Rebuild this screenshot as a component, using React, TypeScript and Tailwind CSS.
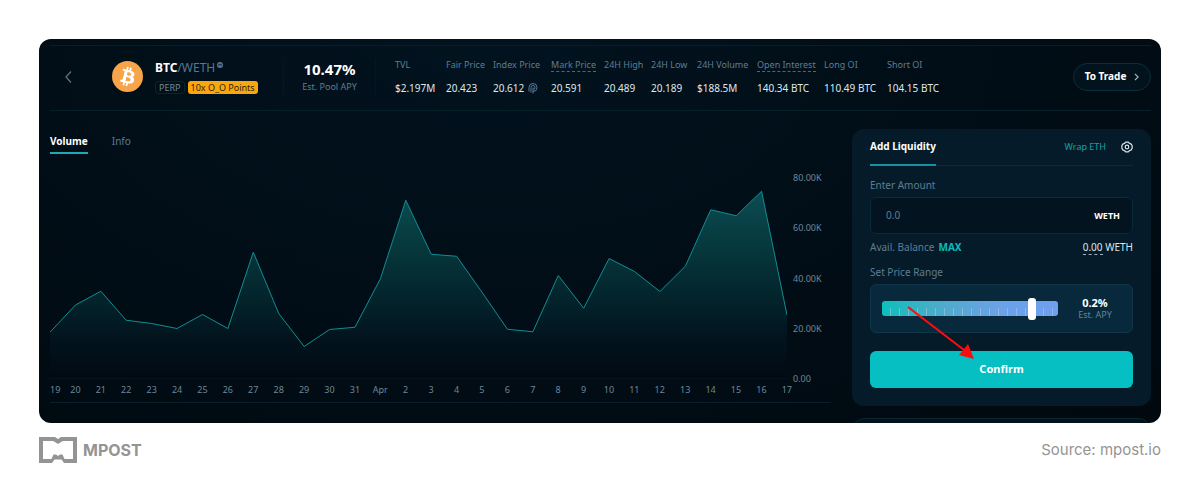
import React, { useState } from "react";

const stats = [
  { label: "TVL", value: "$2.197M" },
  { label: "Fair Price", value: "20.423" },
  { label: "Index Price", value: "20.612", oracle: true },
  { label: "Mark Price", value: "20.591", hint: true },
  { label: "24H High", value: "20.489" },
  { label: "24H Low", value: "20.189" },
  { label: "24H Volume", value: "$188.5M" },
  { label: "Open Interest", value: "140.34 BTC", hint: true },
  { label: "Long OI", value: "110.49 BTC" },
  { label: "Short OI", value: "104.15 BTC" },
];

const days = [
  "19", "20", "21", "22", "23", "24", "25", "26", "27", "28", "29", "30", "31", "Apr", "2",
  "3", "4", "5", "6", "7", "8", "9", "10", "11", "12", "13", "14", "15", "16", "17",
];

// Daily volume in thousands
const volumes = [
  18.3, 29.2, 34.7, 23.1, 21.8, 19.8, 25.4, 19.8, 50.3, 25.8, 12.6, 19.4, 20.3, 39.7, 71.1,
  49.5, 48.7, 34.3, 19.5, 18.5, 41, 27.9, 47.8, 42.6, 34.6, 44.7, 67.3, 64.9, 74.7, 25.2,
];

const points = volumes.map((v, i) => `${i * 10},${(80 - v) * 2.5}`).join(" ");

function BitcoinIcon() {
  return (
    <svg viewBox="0 0 32 32" className="size-[31px] shrink-0" aria-hidden="true">
      <circle cx="16" cy="16" r="16" fill="#f7a54a" />
      <path
        fill="#fff"
        d="M23.19 14.02c.31-2.1-1.28-3.22-3.47-3.98l.71-2.84-1.73-.43-.69 2.77c-.45-.12-.92-.22-1.38-.33l.69-2.78-1.73-.43-.7 2.84c-.38-.09-.75-.17-1.11-.26l-2.38-.6-.46 1.85s1.28.3 1.25.31c.7.18.83.64.81 1.01l-.81 3.23c.05.01.11.03.18.06l-.18-.05-1.13 4.53c-.09.21-.3.53-.79.41.02.03-1.26-.31-1.26-.31l-.86 1.98 2.25.56c.42.1.83.21 1.23.31l-.72 2.88 1.73.43.71-2.84c.47.13.93.25 1.38.36l-.71 2.83 1.73.43.72-2.87c2.95.56 5.17.33 6.1-2.34.75-2.14-.04-3.38-1.59-4.19 1.13-.26 1.98-1 2.21-2.54zm-3.95 5.54c-.53 2.15-4.15.99-5.32.7l.95-3.81c1.17.29 4.93.87 4.37 3.11zm.54-5.57c-.49 1.96-3.5.96-4.48.72l.86-3.45c.98.24 4.13.7 3.62 2.73z"
      />
    </svg>
  );
}

function PythIcon() {
  return (
    <svg viewBox="0 0 20 22" className="h-[11px] w-[10px]" fill="none" stroke="#587b96" strokeWidth="2" aria-hidden="true">
      <path d="M2 17V9a8 8 0 1 1 8 8M6 19V9a4 4 0 1 1 4 4M10 21V9" />
    </svg>
  );
}

function VolumeChart() {
  return (
    <section className="flex min-w-0 flex-1 flex-col">
      <nav className="flex gap-6 text-[10px] leading-4">
        <button className="border-b-2 border-[#1fa9b0] pb-[3px] font-bold text-white">Volume</button>
        <button className="border-b-2 border-transparent pb-[3px] text-[#5f7b90]">Info</button>
      </nav>
      <div className="mt-4 flex border-b border-[#05202b] pb-1">
        <div className="min-w-0 flex-1">
          <div className="pt-2">
            <svg
              viewBox="0 0 290 200"
              preserveAspectRatio="none"
              className="block h-[201px] w-full border-b border-[#04141f]"
              role="img"
              aria-label="Daily volume"
            >
              <defs>
                <linearGradient id="volumeFill" gradientUnits="userSpaceOnUse" x1="0" y1="12" x2="0" y2="200">
                  <stop offset="0" stopColor="#0b4d54" />
                  <stop offset="0.3" stopColor="#06383c" />
                  <stop offset="0.6" stopColor="#03222a" />
                  <stop offset="0.8" stopColor="#02131d" />
                  <stop offset="1" stopColor="#010a12" />
                </linearGradient>
              </defs>
              <polygon points={`0,200 ${points} 290,200`} fill="url(#volumeFill)" />
              <polyline points={points} fill="none" stroke="#118d92" strokeWidth="1" vectorEffect="non-scaling-stroke" />
            </svg>
          </div>
          <ol className="-mr-3 flex justify-between overflow-hidden pt-[3px] pr-3 text-[9px] leading-4 text-[#6d8799]">
            {days.map((d, i) => (
              <li key={d} className={i === 0 ? "flex w-0 justify-start" : "flex w-0 justify-center"}>
                <span>{d}</span>
              </li>
            ))}
          </ol>
        </div>
        <ul className="flex h-[217px] w-11 flex-col justify-between pl-1.5 text-[9px] leading-4 text-[#6d8799]">
          {["80.00K", "60.00K", "40.00K", "20.00K", "0.00"].map((t) => (
            <li key={t}>{t}</li>
          ))}
        </ul>
      </div>
    </section>
  );
}

function LiquidityPanel() {
  const [range, setRange] = useState(87);
  return (
    <form className="relative rounded-xl bg-[#051b29] px-[18px] pb-[18px]" onSubmit={(e) => e.preventDefault()}>
      <div className="flex h-[37px] items-stretch border-b border-[#0a2c38] text-[10px]">
        <h2 className="-mb-px flex items-center border-b-2 border-[#1791a0] font-bold text-white">Add Liquidity</h2>
        <button type="button" className="ml-auto text-[9px] text-[#12a3a6]">Wrap ETH</button>
        <button type="button" aria-label="Settings" className="ml-[15px]">
          <svg viewBox="0 0 24 24" className="size-3" fill="none" stroke="#dce6ec" strokeWidth="2.4" aria-hidden="true">
            <path d="M9.5 2.2h5l2.6 2.6 3.6 1.4 1.6 3.6v4.4l-1.6 3.6-3.6 1.4-2.6 2.6h-5l-2.6-2.6-3.6-1.4-1.6-3.6V9.800l1.600-3.600 3.600-1.400z" />
            <circle cx="12" cy="12" r="3.600" />
          </svg>
        </button>
      </div>
      <label htmlFor="amount" className="mt-[11px] block text-[10px] leading-4 text-[#5f7d91]">Enter Amount</label>
      <div className="mt-1 flex h-[37px] items-center rounded-md border border-[#082b38] bg-[#03131f] pr-3 pl-[15px]">
        <input
          id="amount"
          placeholder="0.0"
          className="min-w-0 flex-1 bg-transparent text-[10px] text-white outline-none placeholder:text-[#5f7d91]"
        />
        <span className="text-[9px] font-bold text-white">WETH</span>
      </div>
      <div className="mt-[5px] flex text-[10px] leading-4 text-[#5f7d91]">
        <span>Avail. Balance</span>
        <button type="button" className="ml-1 font-bold text-[#0bbabd]">MAX</button>
        <span className="ml-auto text-[#dbe5ea]">
          <span className="border-b border-dashed border-[#9fb2bd]">0.00</span> WETH
        </span>
      </div>
      <label htmlFor="range" className="mt-[9px] block text-[10px] leading-4 text-[#5f7d91]">Set Price Range</label>
      <div className="mt-1 flex h-[49px] items-center rounded-md border border-[#0e3548] bg-[#08283b] pl-[11px]">
        <input
          id="range"
          type="range"
          min={0}
          max={100}
          value={range}
          onChange={(e) => setRange(Number(e.target.value))}
          className="h-[22px] min-w-0 flex-1 cursor-pointer appearance-none bg-transparent [&::-webkit-slider-runnable-track]:h-[15px] [&::-webkit-slider-runnable-track]:rounded-[3px] [&::-webkit-slider-runnable-track]:bg-[repeating-linear-gradient(90deg,transparent_0_8px,#b4cbe880_8px_9px),linear-gradient(90deg,#0cc0bd,#49adc8_30%,#6aa2e8_65%,#6f9ff0)] [&::-webkit-slider-runnable-track]:bg-[size:100%_8px,100%_100%] [&::-webkit-slider-runnable-track]:bg-[position:bottom,center] [&::-webkit-slider-runnable-track]:bg-no-repeat [&::-webkit-slider-thumb]:-mt-[3px] [&::-webkit-slider-thumb]:h-[22px] [&::-webkit-slider-thumb]:w-2 [&::-webkit-slider-thumb]:appearance-none [&::-webkit-slider-thumb]:rounded-[3px] [&::-webkit-slider-thumb]:bg-white"
        />
        <p className="flex w-[74px] flex-col text-center text-[9px] leading-3 text-[#64849a]">
          <strong className="text-[11px] leading-3 text-white">0.2%</strong>
          <span>Est. APY</span>
        </p>
      </div>
      <button type="submit" className="mt-[18px] h-[37px] w-full rounded-md bg-[#05bfc2] text-[11px] font-bold text-white">
        Confirm
      </button>
      <svg viewBox="0 0 70 56" className="pointer-events-none absolute top-[176px] left-[54px] h-[56px] w-[70px]" aria-hidden="true">
        <path d="M2 2 58 45" stroke="#fb0d0d" strokeWidth="2.200" fill="none" />
        <path d="M68 54 53 50 62 39z" fill="#fb0d0d" />
      </svg>
    </form>
  );
}

export default function App() {
  return (
    <main className="min-h-screen bg-white px-[39px] pt-[39px] font-['Noto_Sans',sans-serif]">
      <div className="overflow-hidden rounded-xl bg-[#010b14] bg-[radial-gradient(ellipse_at_40%_0%,#02131f,#010d16_55%,#01090f)] pt-1.5 pr-2.5 pl-[11px]">
        <header className="flex h-[66px] items-center border-y border-[#05202b] pb-[3px]">
          <button aria-label="Back" className="flex w-[62px] pl-[15px]">
            <svg viewBox="0 0 7 12" className="h-3 w-[7px]" fill="none" stroke="#5b788a" strokeWidth="1.200" aria-hidden="true">
              <path d="M6 .5 1 6l5 5.500" />
            </svg>
          </button>
          <BitcoinIcon />
          <div className="ml-3 w-32">
            <h1 className="flex text-[12px] leading-4 text-[#58788f]">
              <b className="text-white">BTC</b>/WETH
              <svg viewBox="0 0 12 12" className="mt-0.5 ml-0.5 size-1.5" aria-hidden="true">
                <circle cx="6" cy="6" r="6" fill="#587b96" />
                <path d="M3.500 8.500v-5L6 6.500l2.500-3v5" fill="none" stroke="#03111c" strokeWidth="1.300" />
              </svg>
            </h1>
            <div className="mt-[5px] flex gap-[3px] text-[9px] leading-[13px] whitespace-nowrap">
              <span className="rounded-[3px] border border-[#0a2430] px-[3px] leading-[11px] text-[#6e8a9d]">PERP</span>
              <span className="rounded-[3px] bg-[#fba60c] px-[3px] text-[#2b2413]">10x O_O Points</span>
            </div>
          </div>
          <div className="w-[93px] border-x border-[#041722] text-center text-[9px] text-[#5f7d91]">
            <strong className="block text-[15px] leading-5 text-white">10.47%</strong>
            <span className="block leading-4">Est. Pool APY</span>
          </div>
          <dl className="ml-[19px] grid grid-cols-[51px_47px_58px_53px_47px_46px_60px_67px_63px_60px] whitespace-nowrap">
            {stats.map((s) => (
              <div key={s.label}>
                <dt className="text-[9px] leading-4 text-[#5f7d91]">
                  <span className={s.hint ? "border-b border-dashed border-[#4a697d]" : ""}>{s.label}</span>
                </dt>
                <dd className="mt-[7px] flex items-center gap-1 text-[10px] leading-4 text-[#dfe8ed]">
                  {s.value}
                  {s.oracle && <PythIcon />}
                </dd>
              </div>
            ))}
          </dl>
          <a
            href="#trade"
            className="ml-auto flex h-7 w-[78px] shrink-0 items-center justify-center gap-2 rounded-full border border-[#0a2e3b] bg-[#02131e] text-[10px] font-bold whitespace-nowrap text-white"
          >
            To Trade
            <svg viewBox="0 0 6 10" className="h-2 w-[5px]" fill="none" stroke="#9fb3c0" strokeWidth="1.500" aria-hidden="true">
              <path d="m1 1 4 4-4 4" />
            </svg>
          </a>
        </header>
        <div className="flex gap-[21px]">
          <div className="flex min-w-0 flex-1 pt-[22px]">
            <VolumeChart />
          </div>
          <aside className="w-[299px] shrink-0 pt-[18px]">
            <LiquidityPanel />
            <div className="mt-3 h-[5px] overflow-hidden">
              <div className="h-6 rounded-xl border border-[#0a2631] bg-[#03111b]" />
            </div>
          </aside>
        </div>
      </div>
      <footer className="mt-3.5 flex items-center justify-between font-['Inter',sans-serif] text-[#949494]">
        <div className="flex items-center gap-1.5 text-[16px] leading-[26px] font-bold">
          <svg viewBox="0 0 38 26" className="h-[26px] w-[38px]" aria-hidden="true">
            <path
              fill="#949494"
              fillRule="evenodd"
              d="M0 0H16L19 2 22 0H38V26H25L22.500 22.500H15.500L13 26H0zM4 4V22H12.500L14.500 17.500H17L19 19 21 17.500H23.500L25.500 22H34V4H24L22 5 19 7 16 5 14 4z"
            />
          </svg>
          MPOST
        </div>
        <p className="text-[15px] leading-[26px]">Source: mpost.io</p>
      </footer>
    </main>
  );
}
